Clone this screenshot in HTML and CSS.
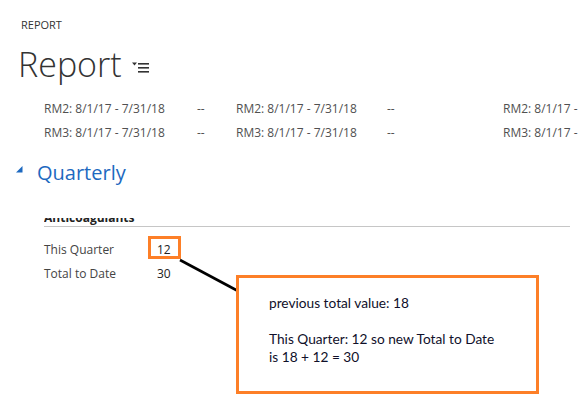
FILE: index.html
```html
<!DOCTYPE html>
<html lang="en">
<head>
<meta charset="utf-8">
<title>Report</title>
<link rel="stylesheet" href="styles.css">
</head>
<body>
<div class="page">
  <div class="crumb">REPORT</div>
  <div class="title-row">
    <h1 class="title">Report</h1>
    <svg class="menu-icon" width="17" height="11" viewBox="0 0 17 11" aria-hidden="true">
      <polygon points="0,0.5 5,0.5 2.5,3.5" fill="#333"/>
      <rect x="6" y="1" width="11" height="1.6" fill="#333"/>
      <rect x="6" y="5" width="11" height="1.6" fill="#333"/>
      <rect x="6" y="9" width="11" height="1.6" fill="#333"/>
    </svg>
  </div>

  <div class="meta">
    <span>RM2: 8/1/17 - 7/31/18</span><span>--</span><span>RM2: 8/1/17 - 7/31/18</span><span>--</span><span>RM2: 8/1/17 - 7/31/18</span>
    <span>RM3: 8/1/17 - 7/31/18</span><span>--</span><span>RM3: 8/1/17 - 7/31/18</span><span>--</span><span>RM3: 8/1/17 - 7/31/18</span>
  </div>

  <div class="section-head">
    <svg class="caret" width="7" height="7" viewBox="0 0 7 7" aria-hidden="true">
      <polygon points="6.5,0 6.5,6.5 0,6.5" fill="#1d69c0"/>
    </svg>
    <h2 class="section-title">Quarterly</h2>
  </div>

  <div class="group">
    <div class="group-title"><span>Anticoagulants</span></div>
    <div class="fields">
      <span class="label">This Quarter</span><span class="value"><span class="hl">12</span></span>
      <span class="label">Total to Date</span><span class="value">30</span>
    </div>
  </div>
</div>

<svg class="connector" width="578" height="405" viewBox="0 0 578 405" aria-hidden="true">
  <line x1="180" y1="260" x2="238" y2="291" stroke="#000" stroke-width="2.6"/>
</svg>

<div class="callout">
  <p>previous total value: 18</p>
  <p class="gap">This Quarter: 12 so new Total to Date<br>is 18 + 12 = 30</p>
</div>
</body>
</html>
```

FILE: styles.css
```css
html, body {
  margin: 0;
  padding: 0;
  background: #fff;
}

body {
  font-family: "Open Sans", "Noto Sans", sans-serif;
  color: #444;
  width: 578px;
  height: 405px;
  overflow: hidden;
  position: relative;
}

.page {
  padding-top: 18px;
}

.crumb {
  padding-left: 21px;
  font-size: 11px;
  line-height: 14px;
  color: #333;
}

.title-row {
  display: flex;
  align-items: center;
  gap: 10px;
  padding-left: 18px;
  margin-top: 12px;
  height: 40px;
}

.title {
  margin: 0;
  font-size: 34px;
  font-weight: 300;
  line-height: 40px;
  color: #333;
}

.menu-icon {
  margin-top: 6px;
}

.meta {
  display: grid;
  grid-template-columns: 153px 39px 151px 116px 1fr;
  grid-auto-rows: 24px;
  align-items: center;
  padding-left: 44px;
  margin-top: 12px;
  font-size: 12px;
  color: #505050;
  white-space: nowrap;
  overflow: hidden;
}

.section-head {
  display: flex;
  align-items: center;
  gap: 14px;
  padding-left: 16px;
  margin-top: 14px;
  height: 30px;
}

.caret {
  margin-top: -8px;
}

.section-title {
  margin: 0;
  font-size: 20px;
  font-weight: 400;
  line-height: 30px;
  color: #1d69c0;
}

.group {
  margin-top: 30px;
  margin-left: 44px;
  margin-right: 8px;
}

.group-title {
  height: 7px;
  padding-bottom: 1px;
  border-bottom: 1px solid #c6c6c6;
  overflow: hidden;
  display: flex;
  align-items: flex-end;
  font-size: 12px;
  font-weight: 700;
  color: #222;
}

.group-title span {
  line-height: 14px;
}

.fields {
  display: grid;
  grid-template-columns: 113px 1fr;
  grid-auto-rows: 24px;
  align-items: center;
  margin-top: 10px;
  font-size: 12px;
}

.label {
  color: #444;
}

.value {
  color: #222;
}

.hl {
  position: relative;
}

.hl::before {
  content: "";
  position: absolute;
  left: -9px;
  top: -5px;
  width: 27px;
  height: 17px;
  border: 3px solid #fd7f27;
}

.connector {
  position: absolute;
  left: 0;
  top: 0;
  pointer-events: none;
}

.callout {
  position: absolute;
  left: 236px;
  top: 275px;
  width: 267px;
  height: 97px;
  border: 3px solid #fd7f27;
  padding: 16px 0 0 30px;
  font-family: "Lato", "Open Sans", sans-serif;
  font-size: 13.7px;
  line-height: 18px;
  color: #10102a;
  background: #fff;
}

.callout p {
  margin: 0;
}

.callout .gap {
  margin-top: 18px;
}
```
